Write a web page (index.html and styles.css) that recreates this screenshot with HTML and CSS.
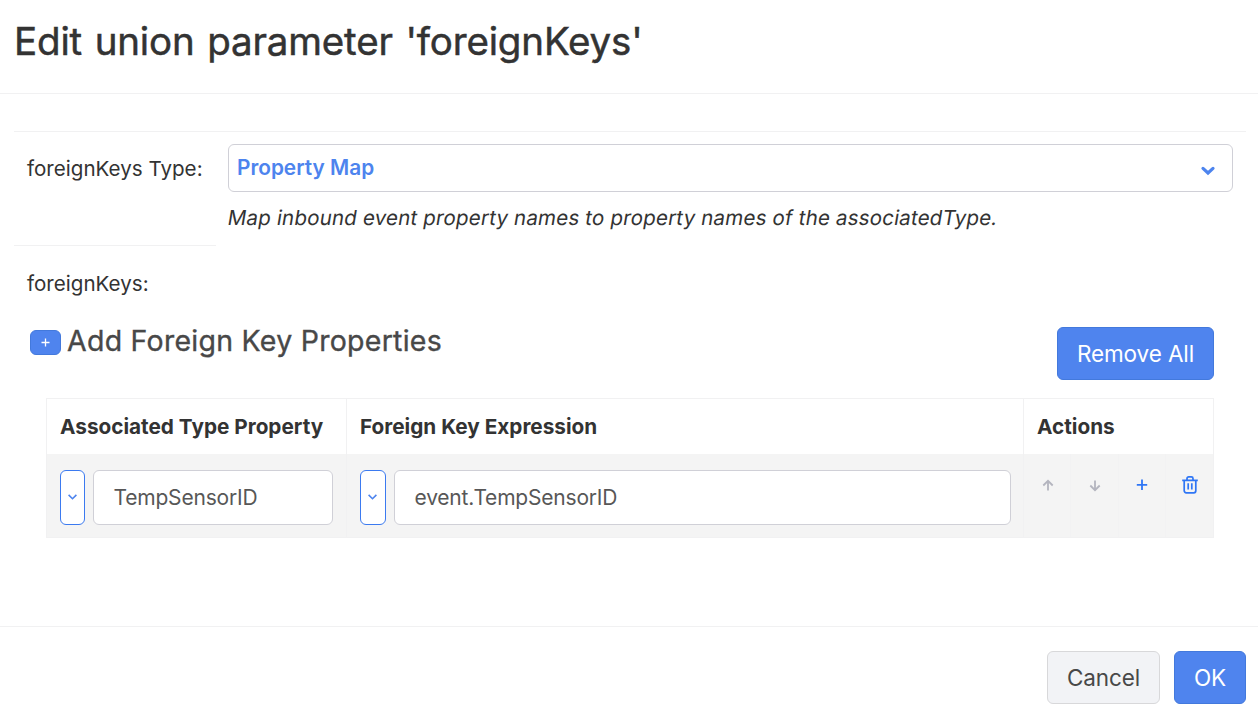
FILE: index.html
```html
<!DOCTYPE html>
<html lang="en">
<head>
<meta charset="utf-8">
<title>Edit union parameter</title>
<link rel="stylesheet" href="styles.css">
</head>
<body>
<div class="dialog">
  <header class="dialog-header"><h1 class="title">Edit union parameter 'foreignKeys'</h1></header>
  <main class="dialog-body">
    <section class="type-row">
      <div class="type-label">foreignKeys Type:</div>
      <div class="type-field">
        <div class="select">
          <span class="select-value">Property Map</span>
          <svg class="select-arrow" width="16" height="12" viewBox="0 0 16 12"><path d="M3 3.4l5 4.6 5-4.6" fill="none" stroke="#4d84ee" stroke-width="3.2" stroke-linecap="round"/></svg>
        </div>
        <p class="hint">Map inbound event property names to property names of the associatedType.</p>
      </div>
    </section>
    <div class="keys-label">foreignKeys:</div>
    <section class="toolbar">
      <button class="btn-add" aria-label="Add"><svg width="9" height="9" viewBox="0 0 9 9"><path d="M4.5 .5v8M.5 4.5h8" stroke="#fff" stroke-width="1.3"/></svg></button>
      <h2 class="subtitle">Add Foreign Key Properties</h2>
      <button class="btn btn-primary btn-remove">Remove All</button>
    </section>
    <section class="table">
      <div class="row head">
        <div class="cell c1">Associated Type Property</div>
        <div class="cell c2">Foreign Key Expression</div>
        <div class="cell c3">Actions</div>
      </div>
      <div class="row data">
        <div class="cell c1">
          <button class="picker" aria-label="Pick"><svg width="9" height="6" viewBox="0 0 9 6"><path d="M.6.9l3.9 3.8L8.4.9" fill="none" stroke="#4d84ee" stroke-width="1.6"/></svg></button>
          <div class="input">TempSensorID</div>
        </div>
        <div class="cell c2">
          <button class="picker wide" aria-label="Pick"><svg width="9" height="6" viewBox="0 0 9 6"><path d="M.6.9l3.9 3.8L8.4.9" fill="none" stroke="#4d84ee" stroke-width="1.6"/></svg></button>
          <div class="input">event.TempSensorID</div>
        </div>
        <div class="actions">
          <div class="action"><svg width="18" height="20" viewBox="0 0 18 20"><path d="M9 15.500V6.100M4.300 10.500L9 5.800l4.700 4.700" fill="none" stroke="#b4b5bf" stroke-width="1.8"/></svg></div>
          <div class="action"><svg width="18" height="20" viewBox="0 0 18 20"><path d="M9 5.500v9.400M4.300 10.500L9 15.200l4.700-4.700" fill="none" stroke="#b4b5bf" stroke-width="1.8"/></svg></div>
          <div class="action"><svg width="18" height="20" viewBox="0 0 18 20"><path d="M9 4.600v10.400M3.800 9.800h10.400" fill="none" stroke="#2f76f5" stroke-width="1.8"/></svg></div>
          <div class="action last"><svg width="18" height="20" viewBox="0 0 18 20"><path d="M1.200 5.400h15.600M3.200 5.400v10.400a2 2 0 0 0 2 2h7.600a2 2 0 0 0 2-2V5.400M6 5.200V3.400A1.600 1.600 0 0 1 7.600 1.800h2.800A1.600 1.600 0 0 1 12 3.400v1.800M7.200 8.200v6.400M10.800 8.200v6.400" fill="none" stroke="#2f76f5" stroke-width="1.7"/></svg></div>
        </div>
      </div>
    </section>
  </main>
  <footer class="dialog-footer">
    <button class="btn btn-cancel">Cancel</button>
    <button class="btn btn-primary btn-ok">OK</button>
  </footer>
</div>
</body>
</html>
```
FILE: styles.css
```css
* { box-sizing: border-box; }
body { margin: 0; background: #fff; color: #333; font-family: Inter, "Liberation Sans", sans-serif; font-size: 20.6px; }
h1, h2, p { margin: 0; }
button { font-family: inherit; padding: 0; }
svg { display: block; }
.dialog { display: flex; flex-direction: column; width: 1258px; height: 718px; overflow: hidden; white-space: nowrap; }
.dialog-header { height: 94px; padding: 16px 14px 0; border-bottom: 1px solid #f1f1f2; }
.title { font-size: 38.5px; line-height: 50px; font-weight: 400; letter-spacing: -.16px; word-spacing: 2px; -webkit-text-stroke: .5px #333; }
.dialog-body { height: 532px; padding: 37px 12px 0 14px; }
.type-row { display: flex; height: 115px; border-top: 1px solid #f1f1f2; }
.type-label { width: 202px; padding: 24px 0 0 13px; line-height: 26px; border-bottom: 1px solid #f1f1f2; }
.type-field { flex: 1; padding: 12px 13px 0 12px; }
.select { display: flex; align-items: center; justify-content: space-between; height: 48px; padding: 0 16px 0 8px; border: 1px solid #d0d0d7; border-radius: 6px; }
.select-value { margin-top: -2px; color: #4d84ee; font-weight: 600; font-size: 20.8px; }
.select-arrow { margin-top: 5px; }
.hint { width: max-content; margin-top: 13px; line-height: 26px; letter-spacing: .14px; transform: skewX(-9.4deg); }
.keys-label { height: 81px; padding: 25px 0 0 13px; line-height: 26px; }
.toolbar { display: flex; align-items: flex-start; height: 71px; padding: 0 32px 0 16px; }
.btn-add { display: flex; align-items: center; justify-content: center; width: 31px; height: 25px; margin-top: 3px; border: 1px solid #4379dc; border-radius: 6px; background: #4f84ee; }
.subtitle { flex: 1; padding-left: 6px; font-size: 28.5px; line-height: 28px; font-weight: 400; color: #484848; letter-spacing: .26px; -webkit-text-stroke: .35px #484848; }
.btn { height: 53px; border-radius: 6px; border: 1px solid #4379dc; font-size: 22.5px; letter-spacing: -.1px; }
.btn-primary { color: #fff; background: #4f84ee; }
.btn-remove { width: 157px; }
.table { margin: 0 32px; border: 1px solid #f1f1f2; width: 1168px; height: 140px; }
.row { display: grid; grid-template-columns: 300px 677px 189px; }
.cell { display: flex; border-right: 1px solid #f1f1f2; }
.c3 { border-right: 0; }
.head { height: 55px; font-weight: 700; font-size: 20.75px; }
.head .cell { align-items: center; padding-left: 13px; }
.data { height: 83px; background: #f4f4f4; }
.data .cell { padding: 16px 13px 0; gap: 8px; }
.data .c2 { padding-right: 12px; }
.picker { display: flex; align-items: center; justify-content: center; flex: none; width: 25px; height: 55px; padding-bottom: 2px; border: 1px solid #3b7af0; border-radius: 6px; background: #fff; }
.wide { width: 26px; padding-right: 1px; }
.input { flex: 1; height: 55px; padding: 0 20px 0 19.5px; border: 1px solid #d0d0d7; border-radius: 6px; background: #fff; color: #575757; font-size: 21px; letter-spacing: -.2px; line-height: 53px; }
.actions { display: grid; grid-template-columns: repeat(4, 1fr); }
.action { display: flex; justify-content: center; padding: 21px 0 0 1px; border-right: 1px solid #f2f2f3; }
.last { padding-left: 2px; border-right: 0; }
.dialog-footer { display: flex; justify-content: flex-end; gap: 14px; height: 92px; padding: 24px 12px 0; border-top: 1px solid #f1f1f2; }
.btn-cancel { width: 113px; color: #484848; background: #f2f3f6; border-color: #d8d8da; }
.btn-ok { width: 72px; }
```
